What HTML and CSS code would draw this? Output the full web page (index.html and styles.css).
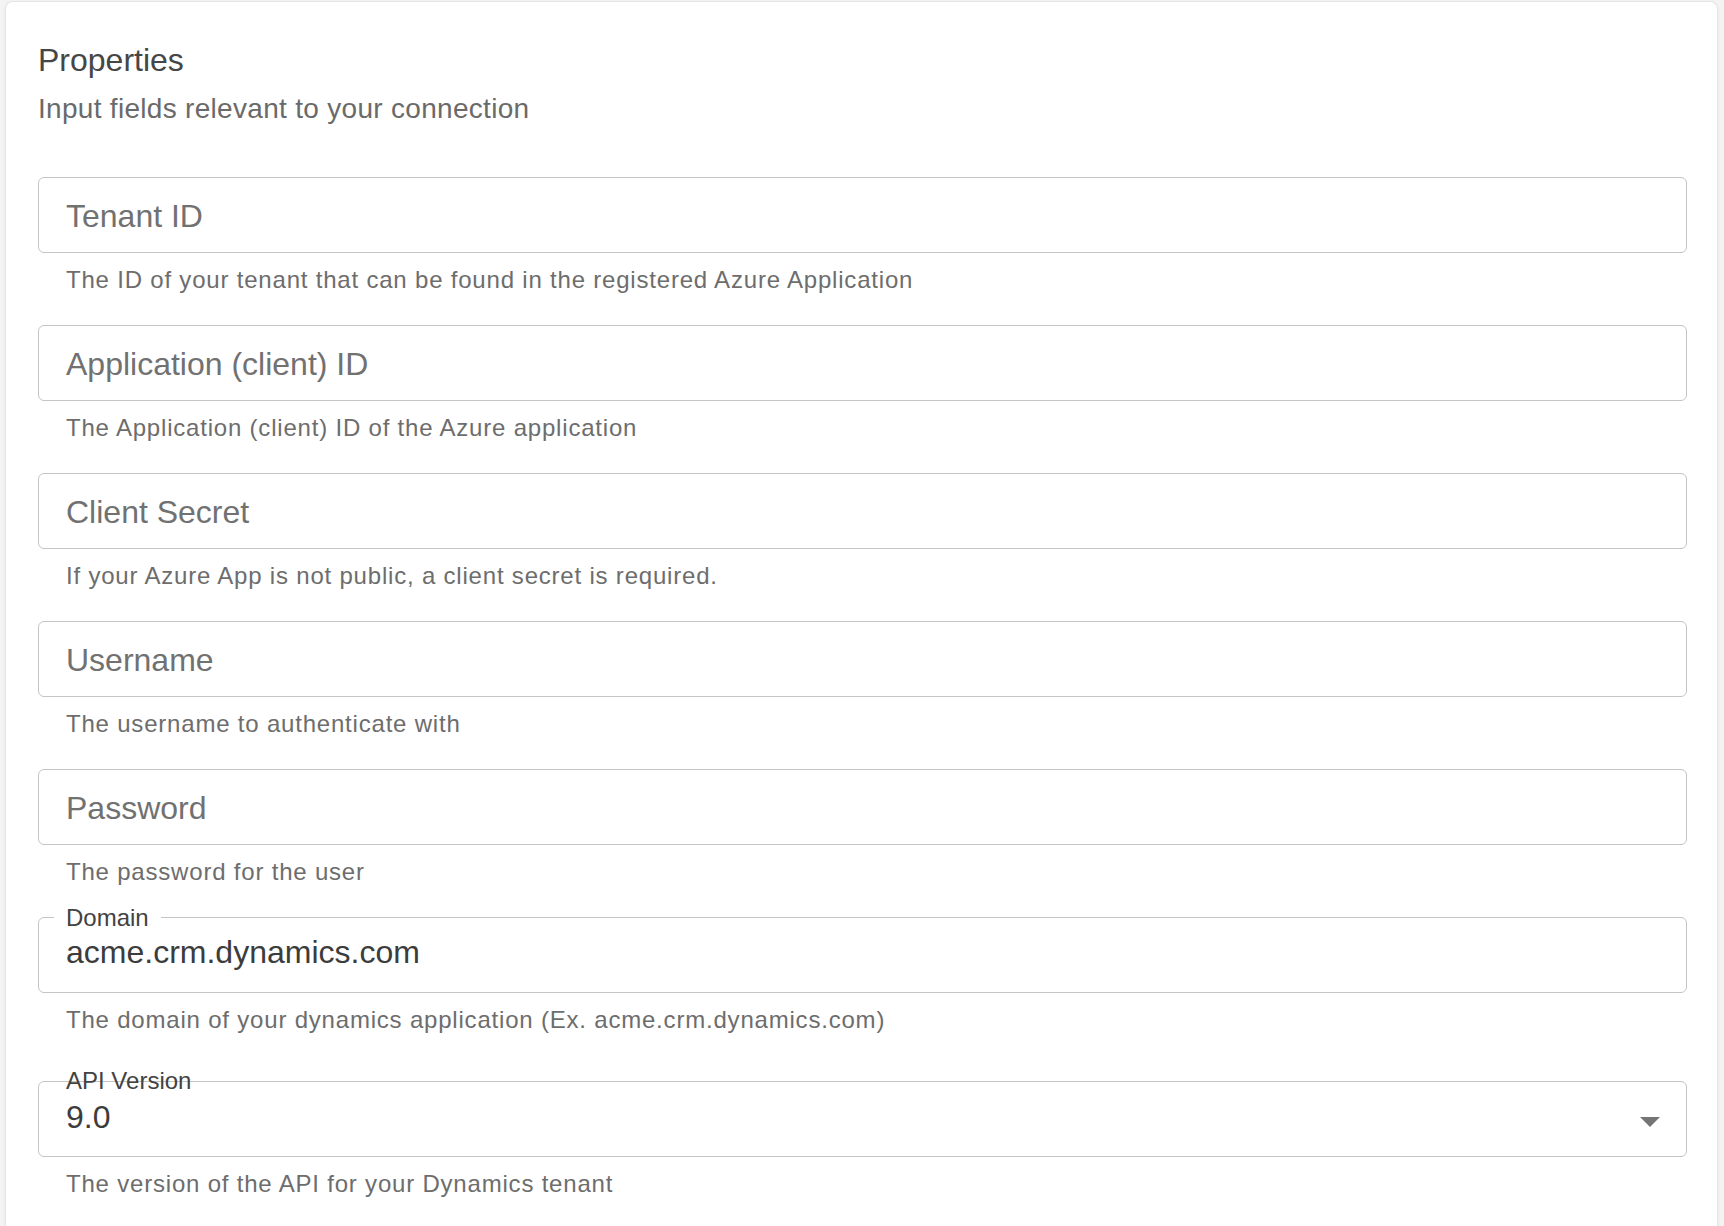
FILE: index.html
```html
<!DOCTYPE html>
<html lang="en">
<head>
<meta charset="utf-8">
<title>Properties</title>
<link rel="stylesheet" href="styles.css">
</head>
<body>
<div class="card">
  <h2 class="title">Properties</h2>
  <p class="subtitle">Input fields relevant to your connection</p>
  <div class="fields">
    <div class="field">
      <div class="box box--empty"><span class="rest-label">Tenant ID</span></div>
      <p class="helper">The ID of your tenant that can be found in the registered Azure Application</p>
    </div>
    <div class="field">
      <div class="box box--empty"><span class="rest-label">Application (client) ID</span></div>
      <p class="helper">The Application (client) ID of the Azure application</p>
    </div>
    <div class="field">
      <div class="box box--empty"><span class="rest-label">Client Secret</span></div>
      <p class="helper">If your Azure App is not public, a client secret is required.</p>
    </div>
    <div class="field">
      <div class="box box--empty"><span class="rest-label">Username</span></div>
      <p class="helper">The username to authenticate with</p>
    </div>
    <div class="field">
      <div class="box box--empty"><span class="rest-label">Password</span></div>
      <p class="helper">The password for the user</p>
    </div>
    <div class="field">
      <div class="box box--filled">
        <span class="float-label float-label--notched">Domain</span>
        <span class="value">acme.crm.dynamics.com</span>
      </div>
      <p class="helper">The domain of your dynamics application (Ex. acme.crm.dynamics.com)</p>
    </div>
    <div class="field field--select">
      <div class="box box--select">
        <span class="float-label float-label--plain">API Version</span>
        <span class="value">9.0</span>
        <svg class="arrow" width="20" height="10" viewBox="0 0 20 10" aria-hidden="true"><polygon points="0,0 20,0 10,10" fill="#757575"/></svg>
      </div>
      <p class="helper">The version of the API for your Dynamics tenant</p>
    </div>
  </div>
</div>
</body>
</html>
```

FILE: styles.css
```css
html, body {
  margin: 0;
  padding: 0;
  overflow: hidden;
  background: #f4f4f4;
  font-family: "Liberation Sans", Arial, Helvetica, sans-serif;
}

.card {
  box-sizing: border-box;
  min-height: calc(100vh - 1px);
  margin: 1px 6px 0 5px;
  padding: 38px 30px 0 32px;
  background: #ffffff;
  border: 1px solid #e6e6e6;
  border-bottom: 0;
  border-radius: 8px 8px 0 0;
  box-shadow: 0 1px 4px rgba(0, 0, 0, 0.06);
}

.title {
  margin: 0;
  font-size: 32px;
  line-height: 40px;
  font-weight: 400;
  color: #464646;
}

.subtitle {
  margin: 11px 0 0;
  font-size: 28px;
  line-height: 36px;
  letter-spacing: 0.3px;
  color: #6a6a6a;
}

.fields {
  margin-top: 50px;
  display: flex;
  flex-direction: column;
}

.field {
  margin-bottom: 29px;
}

.field:last-child {
  margin-bottom: 0;
}

.field--select {
  margin-top: 16px;
}

.box {
  position: relative;
  box-sizing: border-box;
  height: 76px;
  border: 1px solid #c4c4c4;
  border-radius: 6px;
  padding: 0 26px 0 27px;
  display: flex;
  align-items: flex-start;
}

.box--empty {
  padding-top: 19px;
}

.box--filled {
  padding-top: 15px;
}

.box--select {
  padding-top: 16px;
}

.rest-label {
  font-size: 32px;
  line-height: 38px;
  color: #717171;
}

.value {
  font-size: 32px;
  line-height: 38px;
  color: #3c3c3c;
}

.float-label {
  position: absolute;
  top: -12px;
  font-size: 24px;
  line-height: 24px;
  color: #424242;
}

.float-label--notched {
  left: 15px;
  padding: 0 12px;
  background: #ffffff;
}

.float-label--plain {
  left: 27px;
  top: -13px;
}

.arrow {
  margin-left: auto;
  margin-top: 19px;
  flex: none;
}

.helper {
  margin: 11px 0 0 28px;
  font-size: 24px;
  line-height: 32px;
  letter-spacing: 0.8px;
  color: #6d6d6d;
}
```
